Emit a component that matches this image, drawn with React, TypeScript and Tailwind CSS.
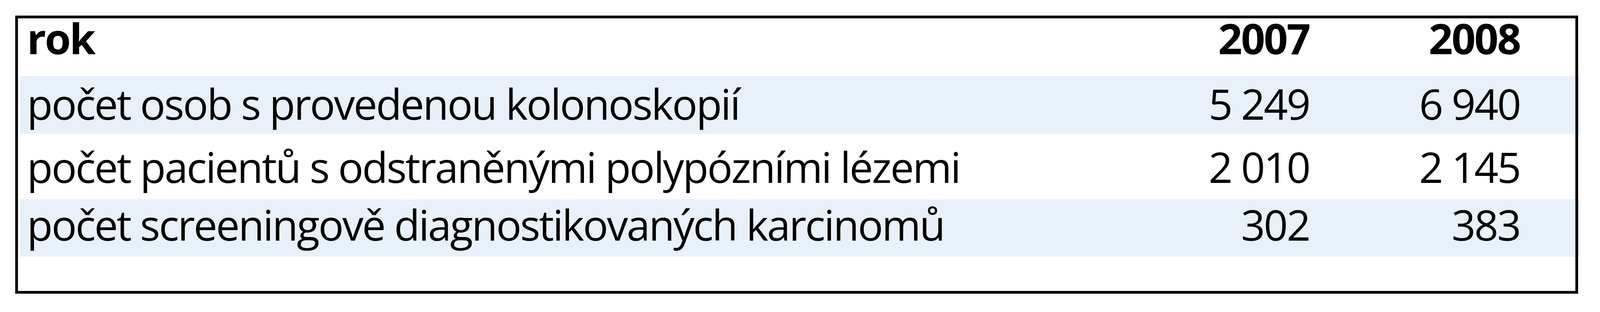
const rows = [
  { label: "počet osob s provedenou kolonoskopií", a: "5 249", b: "6 940", shade: true, h: "h-[148px]", pt: "pt-[31px]" },
  { label: "počet pacientů s odstraněnými polypózními lézemi", a: "2 010", b: "2 145", shade: false, h: "h-[168px]", pt: "pt-[45px]" },
  { label: "počet screeningově diagnostikovaných karcinomů", a: "302", b: "383", shade: true, h: "h-[147px]", pt: "pt-[25px]" },
];

export default function App() {
  return (
    <div className="min-h-[800px] bg-white pl-[46px] pt-[47px] font-['Open_Sans',sans-serif] text-[108px] leading-[80px] tracking-[-3.4px] text-black">
      <div className="h-[699px] w-[3987px] outline-[7px] outline-solid outline-black">
        <div className="ml-[6px] -mr-[12px] grid h-[148px] grid-cols-[1fr_539px_539px] pr-[154px] pl-[17px] pt-[11px] font-bold">
          <div>rok</div>
          <div className="text-right">2007</div>
          <div className="text-right">2008</div>
        </div>
        {rows.map((r) => (
          <div
            key={r.label}
            className={`ml-[6px] -mr-[12px] grid grid-cols-[1fr_539px_539px] pr-[154px] pl-[17px] ${r.h} ${r.pt} ${r.shade ? "bg-[#e8f0fa]" : ""}`}
          >
            <div className="whitespace-nowrap">{r.label}</div>
            <div className="text-right">{r.a}</div>
            <div className="text-right">{r.b}</div>
          </div>
        ))}
      </div>
    </div>
  );
}
